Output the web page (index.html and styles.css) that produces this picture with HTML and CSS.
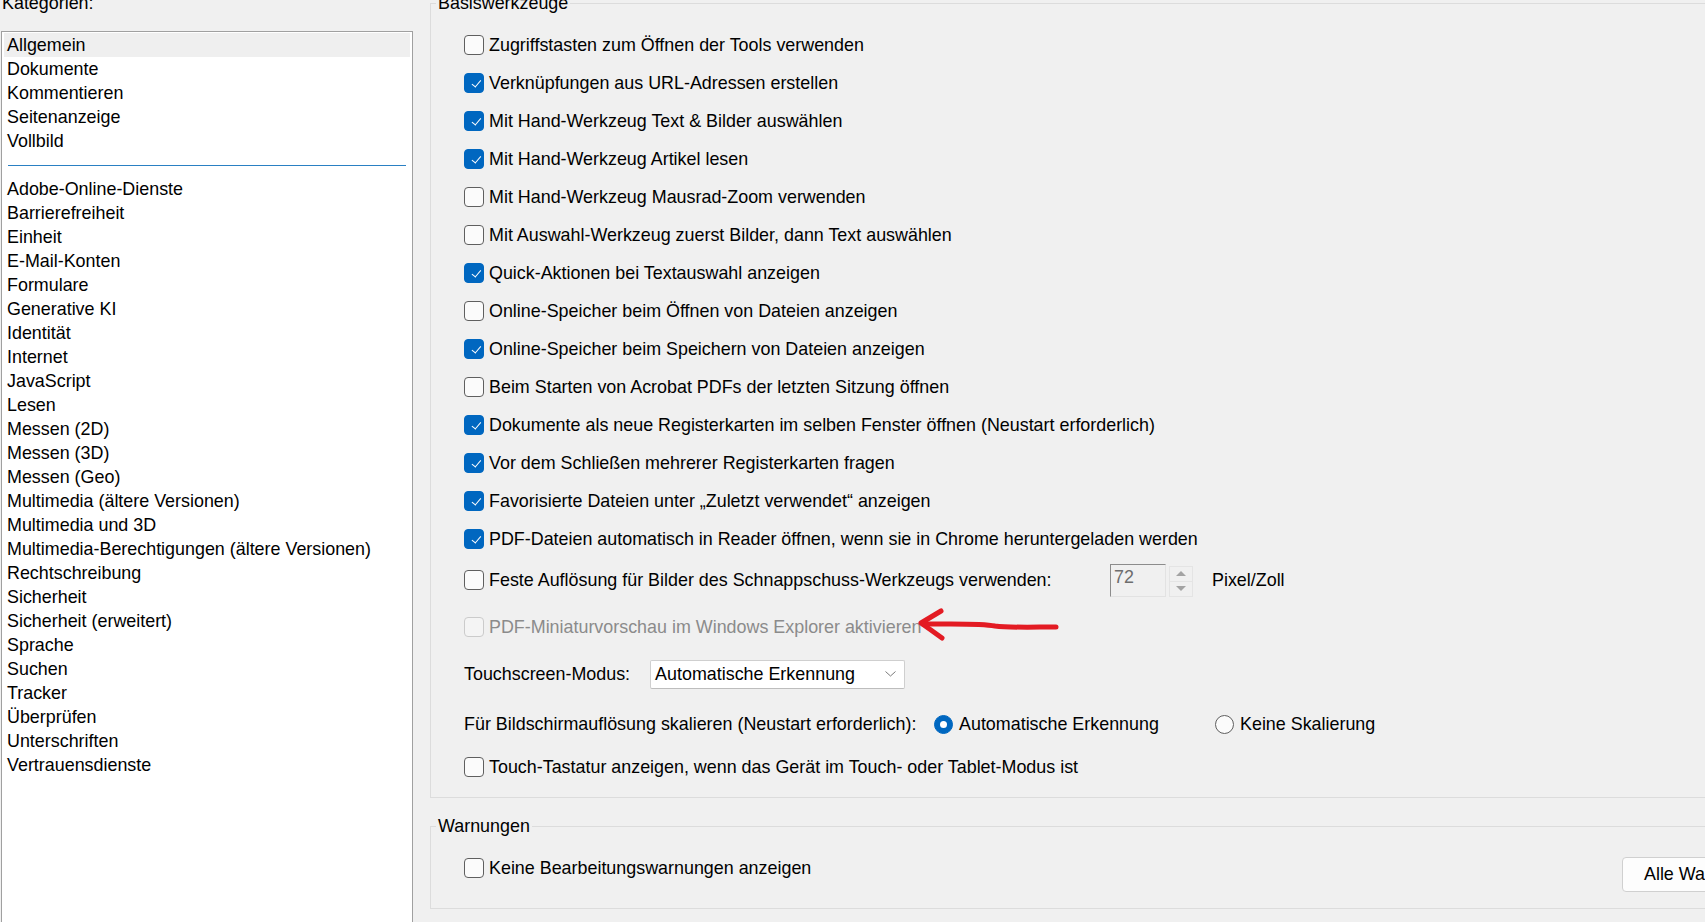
FILE: index.html
```html
<!DOCTYPE html>
<html lang="de">
<head>
    <meta charset="UTF-8">
    <title>Voreinstellungen</title>
    <link rel="stylesheet" href="styles.css">
</head>
<body>
    <div class="prefs">
        <div class="categories">
            <div class="cat-label">Kategorien:</div>
            <div class="listbox">
                <div class="item selected">Allgemein</div>
                <div class="item">Dokumente</div>
                <div class="item">Kommentieren</div>
                <div class="item">Seitenanzeige</div>
                <div class="item">Vollbild</div>
                <div class="divider"></div>
                <div class="item">Adobe-Online-Dienste</div>
                <div class="item">Barrierefreiheit</div>
                <div class="item">Einheit</div>
                <div class="item">E-Mail-Konten</div>
                <div class="item">Formulare</div>
                <div class="item">Generative KI</div>
                <div class="item">Identität</div>
                <div class="item">Internet</div>
                <div class="item">JavaScript</div>
                <div class="item">Lesen</div>
                <div class="item">Messen (2D)</div>
                <div class="item">Messen (3D)</div>
                <div class="item">Messen (Geo)</div>
                <div class="item">Multimedia (ältere Versionen)</div>
                <div class="item">Multimedia und 3D</div>
                <div class="item">Multimedia-Berechtigungen (ältere Versionen)</div>
                <div class="item">Rechtschreibung</div>
                <div class="item">Sicherheit</div>
                <div class="item">Sicherheit (erweitert)</div>
                <div class="item">Sprache</div>
                <div class="item">Suchen</div>
                <div class="item">Tracker</div>
                <div class="item">Überprüfen</div>
                <div class="item">Unterschriften</div>
                <div class="item">Vertrauensdienste</div>
            </div>
        </div>

        <div class="settings">
            <fieldset class="group basics">
                <legend>Basiswerkzeuge</legend>
                <div class="row"><span class="box"></span><span class="text">Zugriffstasten zum Öffnen der Tools verwenden</span></div>
                <div class="row"><span class="box on"></span><span class="text">Verknüpfungen aus URL-Adressen erstellen</span></div>
                <div class="row"><span class="box on"></span><span class="text">Mit Hand-Werkzeug Text &amp; Bilder auswählen</span></div>
                <div class="row"><span class="box on"></span><span class="text">Mit Hand-Werkzeug Artikel lesen</span></div>
                <div class="row"><span class="box"></span><span class="text">Mit Hand-Werkzeug Mausrad-Zoom verwenden</span></div>
                <div class="row"><span class="box"></span><span class="text">Mit Auswahl-Werkzeug zuerst Bilder, dann Text auswählen</span></div>
                <div class="row"><span class="box on"></span><span class="text">Quick-Aktionen bei Textauswahl anzeigen</span></div>
                <div class="row"><span class="box"></span><span class="text">Online-Speicher beim Öffnen von Dateien anzeigen</span></div>
                <div class="row"><span class="box on"></span><span class="text">Online-Speicher beim Speichern von Dateien anzeigen</span></div>
                <div class="row"><span class="box"></span><span class="text">Beim Starten von Acrobat PDFs der letzten Sitzung öffnen</span></div>
                <div class="row"><span class="box on"></span><span class="text">Dokumente als neue Registerkarten im selben Fenster öffnen (Neustart erforderlich)</span></div>
                <div class="row"><span class="box on"></span><span class="text">Vor dem Schließen mehrerer Registerkarten fragen</span></div>
                <div class="row"><span class="box on"></span><span class="text">Favorisierte Dateien unter „Zuletzt verwendet“ anzeigen</span></div>
                <div class="row"><span class="box on"></span><span class="text">PDF-Dateien automatisch in Reader öffnen, wenn sie in Chrome heruntergeladen werden</span></div>

                <div class="row res">
                    <div class="res-check"><span class="box"></span><span class="text">Feste Auflösung für Bilder des Schnappschuss-Werkzeugs verwenden:</span></div>
                    <div class="spin-input">72</div>
                    <div class="spin-btns">
                        <span class="spin-btn"><i class="tri up"></i></span>
                        <span class="spin-btn"><i class="tri down"></i></span>
                    </div>
                    <span class="unit">Pixel/Zoll</span>
                </div>

                <div class="row thumb disabled"><span class="box"></span><span class="text">PDF-Miniaturvorschau im Windows Explorer aktivieren</span></div>

                <div class="row touch">
                    <span class="plain">Touchscreen-Modus:</span>
                    <div class="select">
                        <span>Automatische Erkennung</span>
                        <svg class="chev" width="11" height="6" viewBox="0 0 11 6"><path d="M0.5 0.5 L5.5 5 L10.5 0.5" fill="none" stroke="#7a7a7a" stroke-width="1"/></svg>
                    </div>
                </div>

                <div class="row scale">
                    <span class="plain scale-label">Für Bildschirmauflösung skalieren (Neustart erforderlich):</span>
                    <span class="radio-opt first"><span class="radio on"></span><span class="text">Automatische Erkennung</span></span>
                    <span class="radio-opt"><span class="radio"></span><span class="text">Keine Skalierung</span></span>
                </div>

                <div class="row"><span class="box"></span><span class="text">Touch-Tastatur anzeigen, wenn das Gerät im Touch- oder Tablet-Modus ist</span></div>
            </fieldset>

            <fieldset class="group warnings">
                <legend>Warnungen</legend>
                <div class="row warn-row">
                    <span class="box"></span><span class="text">Keine Bearbeitungswarnungen anzeigen</span>
                    <button class="reset-btn">Alle Warnungen zurücksetzen</button>
                </div>
            </fieldset>
        </div>
    </div>

    <!-- red hand-drawn marker over the screenshot -->
    <svg class="marker" width="150" height="40" viewBox="0 0 150 40">
        <path d="M26 6 Q16 12 6 18 Q16 25 27 33" fill="none" stroke="#e31b23" stroke-width="5" stroke-linecap="round" stroke-linejoin="round"/>
        <path d="M8 19 C40 19 66 18 80 21 C95 23 120 22 141 22" fill="none" stroke="#e31b23" stroke-width="5" stroke-linecap="round"/>
    </svg>
</body>
</html>
```

FILE: styles.css
```css
* {
    margin: 0;
    padding: 0;
    box-sizing: border-box;
}

body {
    width: 1705px;
    height: 922px;
    background: #f0f0f0;
    font-family: 'Liberation Sans', Arial, sans-serif;
    font-size: 17.9px;
    color: #000;
    overflow: hidden;
    position: relative;
}

.prefs {
    display: flex;
    align-items: flex-start;
}

/* left column */
.categories {
    width: 413px;
    padding-left: 1px;
    flex-shrink: 0;
}

.cat-label {
    height: 24px;
    line-height: 24px;
    margin-top: -9px;
    padding-left: 1px;
}

.listbox {
    margin-top: 16px;
    height: 900px;
    background: #fff;
    border: 1px solid #a0a0a0;
    padding: 1px 2px;
}

.item {
    height: 24px;
    line-height: 24px;
    padding-left: 3px;
    white-space: nowrap;
}

.item.selected {
    background: #efefef;
}

.divider {
    height: 24px;
    display: flex;
    align-items: center;
    padding: 0 4px 0 4px;
}

.divider::before {
    content: '';
    display: block;
    width: 100%;
    height: 1px;
    background: #2a80c3;
    margin-top: 1px;
}

/* right column */
.settings {
    margin-left: 17px;
    width: 1490px;
    flex-shrink: 0;
}

.group {
    border: 1px solid #dcdcdc;
    padding: 0 16px 0 33px;
    min-width: 0;
}

.group legend {
    line-height: 20px;
    margin-left: -28px;
    padding: 0 2px;
}

.basics {
    margin-top: -7px;
    padding-top: 13px;
    padding-bottom: 11px;
}

.warnings {
    margin-top: 18px;
    padding-top: 12px;
    padding-bottom: 20px;
}

.row {
    display: flex;
    align-items: center;
    height: 38px;
    white-space: nowrap;
}

.row .text {
    margin-left: 5px;
}

.box {
    width: 20px;
    height: 20px;
    flex-shrink: 0;
    border: 1px solid #5f5f5f;
    border-radius: 4px;
    background: #fbfbfb;
    position: relative;
}

.box.on {
    background: #0067c0;
    border-color: #0067c0;
}

.box.on::after {
    content: '';
    position: absolute;
    left: 6px;
    top: 4px;
    width: 8px;
    height: 4px;
    border-left: 1.4px solid #fff;
    border-bottom: 1.4px solid #fff;
    transform: rotate(-50deg) translate(-1px, 2px);
    transform-origin: center;
}

.disabled .box {
    border-color: #cbcbcb;
    background: #f4f4f4;
}

.disabled .text {
    color: #8b8b8b;
}

.row.res {
    height: 44px;
}

.res-check {
    display: flex;
    align-items: center;
    width: 646px;
}

.spin-input {
    width: 56px;
    height: 33px;
    border: 1px solid;
    border-color: #8c8c8c #e2e2e2 #e2e2e2 #8c8c8c;
    color: #6d6d6d;
    line-height: 22px;
    padding: 1px 3px;
}

.spin-btns {
    display: flex;
    flex-direction: column;
    margin-left: 3px;
    width: 24px;
    height: 31px;
    margin-top: 2px;
}

.spin-btn {
    flex: 1;
    border: 1px solid #e4e4e4;
    display: flex;
    align-items: center;
    justify-content: center;
}

.spin-btn + .spin-btn {
    border-top: none;
}

.tri {
    width: 0;
    height: 0;
    border-left: 5px solid transparent;
    border-right: 5px solid transparent;
}

.tri.up {
    border-bottom: 5px solid #a3a3a3;
}

.tri.down {
    border-top: 5px solid #a3a3a3;
}

.unit {
    margin-left: 19px;
}

.row.thumb {
    height: 50px;
}

.row.touch {
    height: 44px;
}

.select {
    margin-left: 20px;
    width: 255px;
    height: 29px;
    background: #fff;
    border: 1px solid #cfcfcf;
    border-bottom-color: #bdbdbd;
    border-radius: 2px;
    display: flex;
    align-items: center;
    justify-content: space-between;
    padding: 0 8px 0 4px;
}

.chev {
    margin-top: -1px;
}

.row.scale {
    height: 52px;
    padding-top: 4px;
}

.scale-label {
    width: 470px;
}

.radio-opt {
    display: flex;
    align-items: center;
}

.radio-opt.first {
    width: 281px;
}

.radio-opt .text {
    margin-left: 6px;
}

.radio {
    width: 19px;
    height: 19px;
    border-radius: 50%;
    border: 1px solid #5f5f5f;
    background: #fbfbfb;
    flex-shrink: 0;
    position: relative;
}

.radio.on {
    background: #0067c0;
    border-color: #0067c0;
}

.radio.on::after {
    content: '';
    position: absolute;
    left: 50%;
    top: 50%;
    width: 7px;
    height: 7px;
    margin: -3.5px 0 0 -3.5px;
    border-radius: 50%;
    background: #fff;
}

.warn-row {
    height: 40px;
}

.reset-btn {
    margin-left: auto;
    align-self: flex-start;
    margin-top: 9px;
    height: 35px;
    padding: 0 21px;
    font: inherit;
    color: #000;
    background: #fdfdfd;
    border: 1px solid #d0d0d0;
    border-radius: 4px;
}

.marker {
    position: absolute;
    left: 915px;
    top: 605px;
}
```
